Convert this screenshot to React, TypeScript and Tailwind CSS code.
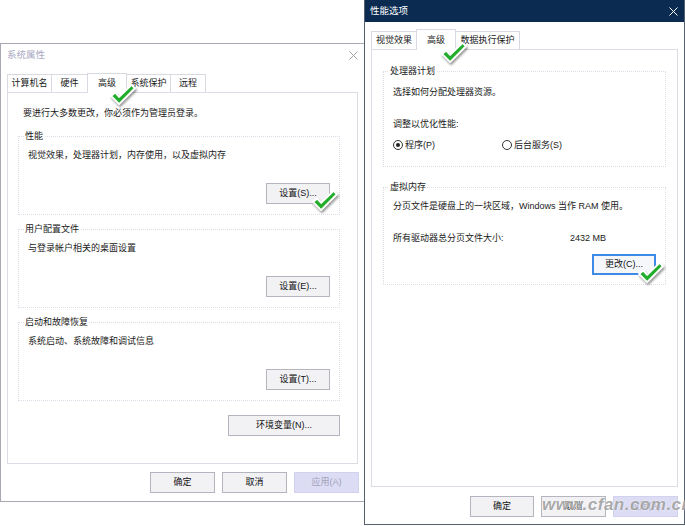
import React from "react";

type BtnProps = {
  children: React.ReactNode;
  className?: string;
  kind?: "normal" | "disabled" | "focus";
};

const Btn = ({ children, className = "", kind = "normal" }: BtnProps) => {
  const look =
    kind === "disabled"
      ? "bg-[#dcdcf4] border-[#d2d2ee] text-[#a2a2ba]"
      : kind === "focus"
      ? "bg-[#f5f7fb] border-2 border-[#3d8be6] text-[#111]"
      : "bg-[#f2f2f5] border-[#b5b5c0] text-[#111]";
  return (
    <div
      className={`h-[21px] border flex items-center justify-center leading-none shrink-0 ${look} ${className}`}
    >
      {children}
    </div>
  );
};

const Check = ({ className }: { className: string }) => (
  <svg
    viewBox="0 0 28 24"
    className={`absolute w-[27px] h-[23px] drop-shadow-[1px_2px_1px_rgba(0,0,0,0.4)] ${className}`}
  >
    <path
      d="M2 13.5 L6.5 10 L10.5 14.5 L23.5 2 L27 5.5 L10.5 22 Z"
      fill="#22ad2c"
      stroke="#fff"
      strokeWidth="2"
      strokeLinejoin="round"
    />
  </svg>
);

const CloseX = ({ color }: { color: string }) => (
  <svg viewBox="0 0 9 9" className="w-[9px] h-[9px]">
    <path d="M0.5 0.5 L8.5 8.5 M8.5 0.5 L0.5 8.5" stroke={color} strokeWidth="1" />
  </svg>
);

type TabDef = { label: string; w: string; active?: boolean };

const Tabs = ({ tabs, rowH, activeH, idleH }: { tabs: TabDef[]; rowH: string; activeH: string; idleH: string }) => (
  <div className={`flex items-end ${rowH}`}>
    {tabs.map((t) => (
      <div
        key={t.label}
        className={`${t.w} ${
          t.active ? `${activeH} mb-[-1px] relative z-10` : idleH
        } -ml-px first:ml-0 bg-white border border-b-0 border-[#d9d9e2] flex items-center justify-center leading-none`}
      >
        {t.label}
      </div>
    ))}
  </div>
);

const SysGroup = ({ title, desc, btn }: { title: string; desc: string; btn: string }) => (
  <fieldset className="border border-dotted border-[#dcdce8] pb-[10px] flex flex-col">
    <legend className="ml-[5px] px-px leading-[12px]">{title}</legend>
    <p className="pt-[7px] pl-[9px] leading-[12px]">{desc}</p>
    <Btn className="w-[64px] self-end mr-[9px] mt-[22px]">{btn}</Btn>
  </fieldset>
);

const Radio = ({ on, label, className = "" }: { on?: boolean; label: string; className?: string }) => (
  <div className={`flex items-center gap-[2px] ${className}`}>
    <span className="w-[10px] h-[10px] rounded-full border border-[#333] bg-white flex items-center justify-center">
      {on && <span className="w-[4px] h-[4px] rounded-full bg-[#222]" />}
    </span>
    <span className="leading-[12px]">{label}</span>
  </div>
);

export default function App() {
  return (
    <div className="relative w-[685px] h-[526px] overflow-hidden bg-white text-[9px] text-[#1a1a1a] font-[family-name:'Liberation_Sans','Noto_Sans_CJK_SC',sans-serif]">
      {/* 系统属性 (inactive) */}
      <div className="absolute left-0 top-[43px] w-[366px] flex flex-col bg-white border border-[#a9a9b6]">
        <div className="h-[22px] flex items-center justify-between pl-[6px] pr-[7px] text-[9.5px] text-[#a9a9c2]">
          <span>系统属性</span>
          <CloseX color="#a0a0a8" />
        </div>
        <div className="px-[6px] pt-[7px] pb-[8px] flex flex-col">
          <Tabs
            rowH="h-[19px]"
            activeH="h-[20px]"
            idleH="h-[18px]"
            tabs={[
              { label: "计算机名", w: "w-[45px]" },
              { label: "硬件", w: "w-[37px]" },
              { label: "高级", w: "w-[40px]", active: true },
              { label: "系统保护", w: "w-[45px]" },
              { label: "远程", w: "w-[36px]" },
            ]}
          />
          <div className="h-[372px] w-[351px] border border-[#dcdce4] flex flex-col pl-[10px] pt-[14px]">
            <p className="pl-[5px] leading-[12px]">要进行大多数更改，你必须作为管理员登录。</p>
            <div className="w-[322px] mt-[11px] flex flex-col gap-[8px]">
              <SysGroup title="性能" desc="视觉效果，处理器计划，内存使用，以及虚拟内存" btn="设置(S)..." />
              <SysGroup title="用户配置文件" desc="与登录帐户相关的桌面设置" btn="设置(E)..." />
              <SysGroup title="启动和故障恢复" desc="系统启动、系统故障和调试信息" btn="设置(T)..." />
              <Btn className="w-[112px] self-end mt-[6px]">环境变量(N)...</Btn>
            </div>
          </div>
          <div className="w-[352px] flex justify-end gap-[7px] mt-[8px]">
            <Btn className="w-[65px]">确定</Btn>
            <Btn className="w-[65px]">取消</Btn>
            <Btn className="w-[65px]" kind="disabled">应用(A)</Btn>
          </div>
        </div>
      </div>

      {/* 性能选项 (active) */}
      <div className="absolute left-[364px] top-0 w-[321px] z-10 flex flex-col bg-white border-x border-b border-[#55606d]">
        <div className="h-[22px] bg-[#0b2b50] flex items-center justify-between pl-[5px] pr-[6px] text-[9.5px] text-white">
          <span>性能选项</span>
          <CloseX color="#ffffff" />
        </div>
        <div className="px-[6px] pt-[7px] pb-[7px] flex flex-col">
          <Tabs
            rowH="h-[20px]"
            activeH="h-[21px]"
            idleH="h-[18px]"
            tabs={[
              { label: "视觉效果", w: "w-[46px]" },
              { label: "高级", w: "w-[40px]", active: true },
              { label: "数据执行保护", w: "w-[65px]" },
            ]}
          />
          <div className="h-[438px] border border-[#dcdce4] flex flex-col pl-[11px] pt-[15px]">
            <fieldset className="w-[283px] border border-dotted border-[#dcdce8] pb-[15px] flex flex-col">
              <legend className="ml-[5px] px-px leading-[12px]">处理器计划</legend>
              <p className="pt-[9px] pl-[9px] leading-[12px]">选择如何分配处理器资源。</p>
              <p className="mt-[20px] pl-[9px] leading-[12px]">调整以优化性能:</p>
              <div className="mt-[9px] pl-[9px] flex">
                <Radio on label="程序(P)" className="w-[109px]" />
                <Radio label="后台服务(S)" />
              </div>
            </fieldset>
            <fieldset className="w-[283px] mt-[14px] border border-dotted border-[#dcdce8] pb-[9px] flex flex-col">
              <legend className="ml-[5px] px-px leading-[12px]">虚拟内存</legend>
              <p className="pt-[7px] pl-[9px] leading-[12px]">分页文件是硬盘上的一块区域，Windows 当作 RAM 使用。</p>
              <div className="mt-[20px] pl-[9px] flex leading-[12px]">
                <span className="w-[177px]">所有驱动器总分页文件大小:</span>
                <span>2432 MB</span>
              </div>
              <Btn className="w-[64px] self-end mr-[9px] mt-[10px]" kind="focus">
                更改(C)...
              </Btn>
            </fieldset>
          </div>
          <div className="flex justify-end gap-[7px] mt-[9px]">
            <Btn className="w-[64px]">确定</Btn>
            <Btn className="w-[65px]">取消</Btn>
            <Btn className="w-[65px]" kind="disabled">应用(A)</Btn>
          </div>
        </div>
      </div>

      {/* annotation ticks */}
      <Check className="left-[109px] top-[83px] z-20" />
      <Check className="left-[311px] top-[189px] z-20" />
      <Check className="left-[440px] top-[41px] z-20" />
      <Check className="left-[637px] top-[261px] z-20" />

      {/* watermark */}
      <div className="absolute left-[542px] top-[496px] z-20 italic font-bold text-[17px] leading-none tracking-[0.5px] text-[#9a9a9a]/85 [text-shadow:0_0_2px_#fff] font-[family-name:'Liberation_Sans',sans-serif]">
        www.cfan.com.cn
      </div>
    </div>
  );
}
